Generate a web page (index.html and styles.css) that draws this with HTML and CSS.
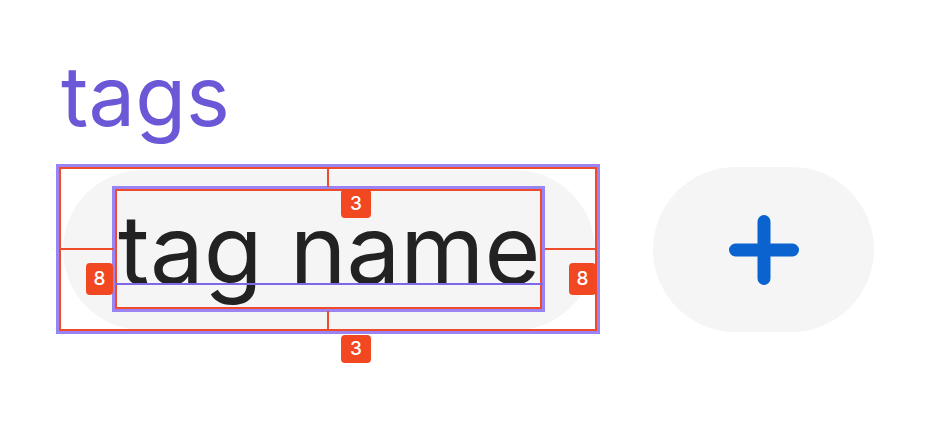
FILE: index.html
```html
<!DOCTYPE html>
<html lang="en">
<head>
    <meta charset="UTF-8">
    <meta name="viewport" content="width=device-width, initial-scale=1.0">
    <title>Tags</title>
    <link rel="stylesheet" href="styles.css">
</head>
<body>
    <!-- Bloque de etiquetas -->
    <section class="tags">
        <h1 class="tags-title">tags</h1>

        <div class="tags-row">
            <!-- Etiqueta con medidas del inspector -->
            <div class="tag">
                <span class="tag-label">tag name</span>

                <div class="spec">
                    <div class="spec-frame spec-outer"></div>
                    <div class="spec-frame spec-inner"></div>
                    <div class="spec-baseline"></div>

                    <div class="spec-line spec-line-top"></div>
                    <div class="spec-line spec-line-bottom"></div>
                    <div class="spec-line spec-line-left"></div>
                    <div class="spec-line spec-line-right"></div>

                    <div class="spec-badge spec-badge-top">3</div>
                    <div class="spec-badge spec-badge-bottom">3</div>
                    <div class="spec-badge spec-badge-left">8</div>
                    <div class="spec-badge spec-badge-right">8</div>
                </div>
            </div>

            <!-- Botón para agregar -->
            <button class="add-button" aria-label="Add tag">
                <svg width="70" height="70" viewBox="0 0 70 70">
                    <path d="M35 6.5 V63.5 M6.5 35 H63.5" stroke="#0a63cf" stroke-width="13" stroke-linecap="round" fill="none"/>
                </svg>
            </button>
        </div>
    </section>
</body>
</html>
```

FILE: styles.css
```css
/* Estilos generales */
body {
    margin: 0;
    padding: 0;
    min-height: 100vh;
    background-color: #ffffff;
    font-family: 'Inter', 'Noto Sans', sans-serif;
}

/* Contenedor */
.tags {
    padding: 55px 0 90px 61px;
}

/* Título */
.tags-title {
    margin: 0;
    font-size: 83px;
    font-weight: 400;
    line-height: 1;
    color: #6a58d6;
}

/* Fila de etiquetas */
.tags-row {
    display: flex;
    align-items: center;
    gap: 58px;
    margin-top: 29px;
    padding-left: 2px;
}

/* Etiqueta */
.tag {
    position: relative;
    box-sizing: border-box;
    width: 532px;
    height: 160px;
    padding: 16px 50px 0 55px;
    background-color: #f5f5f6;
    border-radius: 80px;
}

.tag-label {
    display: block;
    font-size: 96px;
    line-height: 126px;
    color: #222222;
    white-space: nowrap;
}

/* Medidas del inspector */
.spec {
    position: absolute;
    top: -6px;
    left: -7px;
    right: -5px;
    bottom: -4px;
    pointer-events: none;
}

.spec-frame {
    position: absolute;
    box-sizing: border-box;
    border: 3px solid #9a84f3;
    box-shadow: inset 0 0 0 2px #ef4b2a;
}

.spec-outer {
    inset: 0;
}

.spec-inner {
    left: 56px;
    top: 22px;
    width: 433px;
    height: 126px;
}

.spec-baseline {
    position: absolute;
    left: 59px;
    top: 119px;
    width: 428px;
    height: 2px;
    background-color: #7d68e6;
}

.spec-line {
    position: absolute;
    background-color: #ef4b2a;
}

.spec-line-top,
.spec-line-bottom {
    left: 271px;
    width: 2px;
    height: 20px;
}

.spec-line-top {
    top: 3px;
}

.spec-line-bottom {
    bottom: 3px;
}

.spec-line-left,
.spec-line-right {
    top: 84px;
    height: 2px;
}

.spec-line-left {
    left: 3px;
    width: 55px;
}

.spec-line-right {
    left: 489px;
    width: 52px;
}

.spec-badge {
    position: absolute;
    z-index: 2;
    display: flex;
    align-items: center;
    justify-content: center;
    background-color: #f24822;
    color: #ffffff;
    font-size: 19px;
    font-weight: 500;
    border-radius: 4px;
}

.spec-badge-top,
.spec-badge-bottom {
    left: 285px;
    width: 30px;
    height: 29px;
}

.spec-badge-top {
    top: 25px;
}

.spec-badge-bottom {
    top: 171px;
    height: 28px;
}

.spec-badge-left,
.spec-badge-right {
    top: 99px;
    width: 27px;
    height: 32px;
}

.spec-badge-left {
    left: 30px;
}

.spec-badge-right {
    left: 513px;
}

/* Botón de agregar */
.add-button {
    display: flex;
    align-items: center;
    justify-content: center;
    width: 221px;
    height: 165px;
    padding: 0;
    border: none;
    border-radius: 83px;
    background-color: #f5f5f6;
    cursor: pointer;
}
```
